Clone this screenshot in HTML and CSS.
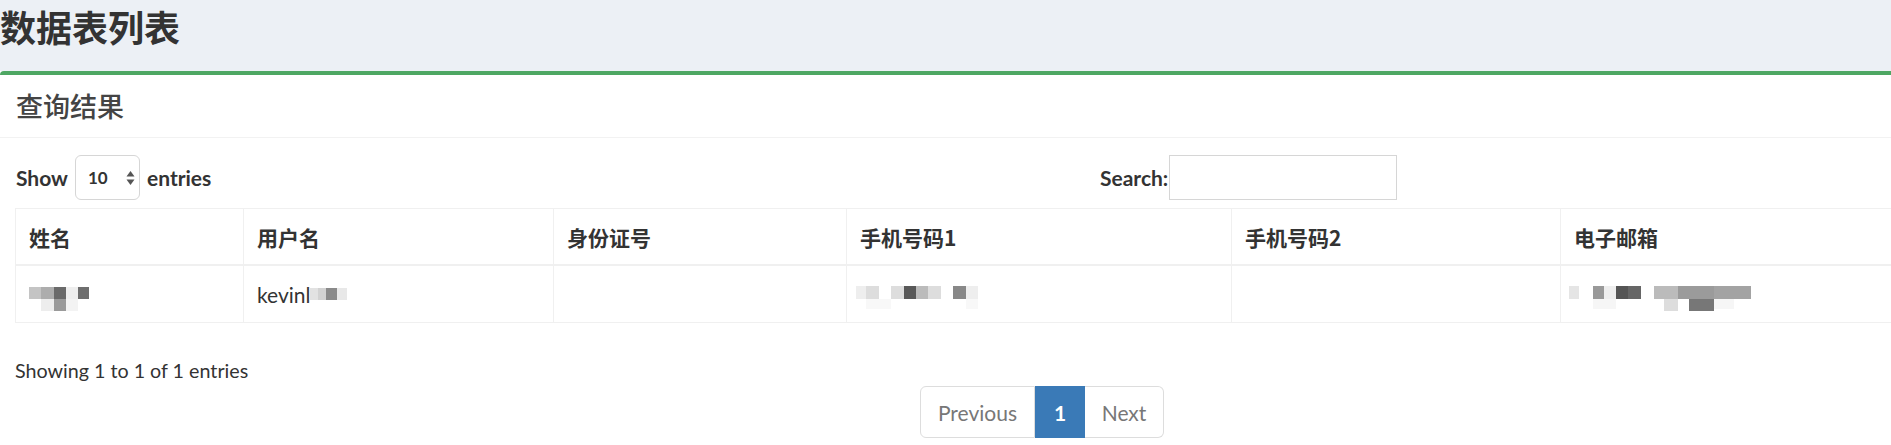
FILE: index.html
```html
<!DOCTYPE html>
<html lang="zh-CN">
<head>
<meta charset="utf-8">
<title>数据表列表</title>
<link rel="stylesheet" href="styles.css">
</head>
<body>
<div class="content-header">
  <h1 class="page-title">数据表列表</h1>
</div>
<div class="box">
  <div class="box-header">
    <h3 class="box-title">查询结果</h3>
  </div>
  <div class="box-body">
    <div class="dt-top">
      <div class="dt-length">
        <span class="lbl">Show</span>
        <div class="fake-select">
          <span class="sel-val">10</span>
          <svg class="sel-arrows" width="9" height="16" viewBox="0 0 9 16"><path d="M4.5 1 L8.5 6.5 H0.5 Z" fill="#555"/><path d="M4.5 15 L8.5 9.5 H0.5 Z" fill="#555"/></svg>
        </div>
        <span class="lbl">entries</span>
      </div>
      <div class="dt-filter">
        <span class="lbl">Search:</span>
        <div class="fake-input"></div>
      </div>
    </div>

    <table class="dt-table">
      <colgroup>
        <col class="c1"><col class="c2"><col class="c3"><col class="c4"><col class="c5"><col class="c6">
      </colgroup>
      <thead>
        <tr><th>姓名</th><th>用户名</th><th>身份证号</th><th>手机号码1</th><th>手机号码2</th><th>电子邮箱</th></tr>
      </thead>
      <tbody>
        <tr>
          <td>
            <svg class="mosaic m-name" width="60" height="24" viewBox="0 0 60 24">
              <rect x="0" y="0" width="12" height="12" fill="#c4c4c4"/>
              <rect x="12" y="0" width="13" height="12" fill="#adadad"/>
              <rect x="25" y="0" width="12" height="12" fill="#6a6a6a"/>
              <rect x="37" y="0" width="12" height="12" fill="#eeeeee"/>
              <rect x="49" y="0" width="11" height="12" fill="#6e6e6e"/>
              <rect x="12" y="12" width="13" height="12" fill="#ededed"/>
              <rect x="25" y="12" width="12" height="12" fill="#9a9a9a"/>
              <rect x="37" y="12" width="12" height="12" fill="#f3f3f3"/>
            </svg>
          </td>
          <td>kevinl<svg class="mosaic m-user" width="37" height="12" viewBox="0 0 37 12">
              <rect x="0" y="0" width="8" height="12" fill="#e2e2e2"/>
              <rect x="8" y="0" width="8" height="12" fill="#d2d2d2"/>
              <rect x="16" y="0" width="11" height="12" fill="#8a8a8a"/>
              <rect x="27" y="0" width="10" height="12" fill="#e8e8e8"/>
            </svg></td>
          <td></td>
          <td>
            <svg class="mosaic m-phone" width="122" height="25" viewBox="0 0 122 25">
              <rect x="0" y="0" width="10" height="13" fill="#eeeeee"/>
              <rect x="10" y="0" width="13" height="13" fill="#dddddd"/>
              <rect x="35" y="0" width="13" height="13" fill="#dddddd"/>
              <rect x="48" y="0" width="12" height="13" fill="#585858"/>
              <rect x="60" y="0" width="12" height="13" fill="#bbbbbb"/>
              <rect x="72" y="0" width="13" height="13" fill="#dddddd"/>
              <rect x="97" y="0" width="13" height="13" fill="#888888"/>
              <rect x="110" y="0" width="12" height="13" fill="#eeeeee"/>
              <rect x="10" y="13" width="25" height="10" fill="#f8f8f8"/>
              <rect x="110" y="13" width="12" height="10" fill="#f8f8f8"/>
            </svg>
          </td>
          <td></td>
          <td>
            <svg class="mosaic m-mail" width="182" height="25" viewBox="0 0 182 25">
              <rect x="0" y="0" width="10" height="13" fill="#e5e5e5"/>
              <rect x="24" y="0" width="11" height="13" fill="#999999"/>
              <rect x="35" y="0" width="12" height="13" fill="#eeeeee"/>
              <rect x="47" y="0" width="12" height="13" fill="#555555"/>
              <rect x="59" y="0" width="13" height="13" fill="#666666"/>
              <rect x="85" y="0" width="24" height="13" fill="#bbbbbb"/>
              <rect x="109" y="0" width="36" height="13" fill="#9b9b9b"/>
              <rect x="145" y="0" width="37" height="13" fill="#a3a3a3"/>
              <rect x="24" y="13" width="23" height="10" fill="#f6f6f6"/>
              <rect x="95" y="13" width="14" height="12" fill="#dddddd"/>
              <rect x="120" y="13" width="25" height="12" fill="#777777"/>
              <rect x="145" y="13" width="20" height="10" fill="#f6f6f6"/>
            </svg>
          </td>
        </tr>
      </tbody>
    </table>

    <div class="dt-info">Showing 1 to 1 of 1 entries</div>
    <div class="dt-paginate">
      <span class="pg pg-prev">Previous</span>
      <span class="pg pg-active">1</span>
      <span class="pg pg-next">Next</span>
    </div>
  </div>
</div>
</body>
</html>
```

FILE: styles.css
```css
html, body {
  margin: 0;
  padding: 0;
  overflow: hidden;
}
body {
  background: #ffffff;
  font-family: "Lato", "Noto Sans CJK SC", sans-serif;
  font-size: 21px;
  color: #333333;
}
.content-header {
  background: #ecf0f5;
  height: 71px;
  box-sizing: border-box;
  padding-top: 5px;
}
.page-title {
  margin: 0;
  font-family: "Noto Sans CJK SC", sans-serif;
  font-size: 36px;
  font-weight: 700;
  line-height: 43px;
  color: #333333;
}
.box {
  border-top: 4px solid #4ea763;
  border-top-left-radius: 4px;
  background: #ffffff;
  overflow: hidden;
}
.box-header {
  height: 62px;
  display: flex;
  align-items: center;
  padding-left: 16px;
  border-bottom: 1px solid #f2f2f2;
}
.box-title {
  margin: 0;
  font-family: "Noto Sans CJK SC", sans-serif;
  font-size: 27px;
  font-weight: 500;
  line-height: 32px;
  color: #444444;
}
.box-body {
  padding: 17px 0 0 15px;
}
.dt-top {
  display: grid;
  grid-template-columns: 1085px auto;
  height: 45px;
}
.dt-length, .dt-filter {
  display: flex;
  align-items: center;
}
.lbl {
  font-weight: 700;
  color: #333333;
}
.dt-length .lbl:first-child {
  margin-left: 1px;
}
.fake-select {
  width: 65px;
  height: 45px;
  box-sizing: border-box;
  border: 1px solid #d6d6d6;
  border-radius: 6px;
  margin: 0 7px 0 7px;
  display: flex;
  align-items: center;
  padding-left: 12px;
}
.sel-val {
  font-size: 17px;
  font-weight: 700;
  color: #333333;
  width: 38px;
}
.sel-arrows {
  display: block;
}
.fake-input {
  width: 228px;
  height: 45px;
  box-sizing: border-box;
  border: 1px solid #d6d6d6;
  margin-left: 1px;
}
.dt-table {
  margin-top: 8px;
  border-collapse: collapse;
  table-layout: fixed;
  width: 1945px;
}
.c1 { width: 228px; }
.c2 { width: 310px; }
.c3 { width: 293px; }
.c4 { width: 385px; }
.c5 { width: 329px; }
.c6 { width: 400px; }
.dt-table th, .dt-table td {
  border: 1px solid #f0f0f0;
  padding: 0 13px;
  text-align: left;
  white-space: nowrap;
  vertical-align: middle;
}
.dt-table th {
  height: 55px;
  font-family: "Noto Sans CJK SC", sans-serif;
  font-weight: 700;
  font-size: 21px;
  border-bottom-width: 2px;
  color: #333333;
}
.dt-table td {
  height: 56px;
  color: #333333;
}
.mosaic {
  display: inline-block;
}
.m-name {
  display: block;
  margin-top: 10px;
}
.m-user {
  vertical-align: 3px;
}
.m-phone {
  display: block;
  margin-top: 8px;
  margin-left: -4px;
}
.m-mail {
  display: block;
  margin-top: 8px;
  margin-left: -5px;
}
.dt-info {
  margin-top: 33px;
  font-size: 19.7px;
  line-height: 29px;
  color: #333333;
}
.dt-paginate {
  display: flex;
  margin-left: 905px;
  margin-top: 1px;
}
.pg {
  height: 52px;
  box-sizing: border-box;
  display: flex;
  align-items: center;
  justify-content: center;
  border: 1px solid #dddddd;
  color: #777777;
  background: #ffffff;
}
.pg-prev {
  width: 115px;
  border-radius: 6px 0 0 6px;
}
.pg-active {
  width: 50px;
  background: #3a7ab7;
  border-color: #3a7ab7;
  color: #ffffff;
  font-weight: 700;
}
.pg-next {
  width: 79px;
  border-left: none;
  border-radius: 0 6px 6px 0;
}
```
